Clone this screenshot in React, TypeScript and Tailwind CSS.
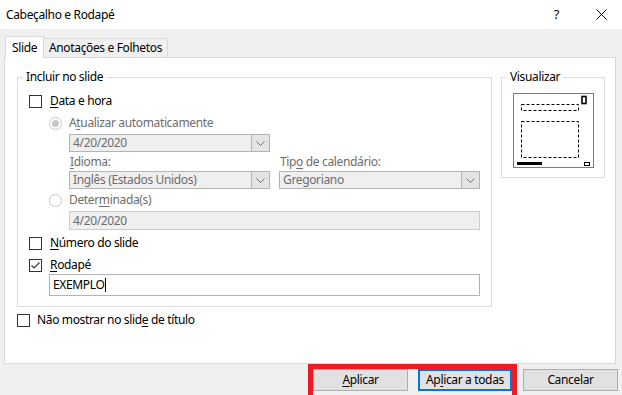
import React from "react";

const font = { fontFamily: '"Noto Sans", "Open Sans", sans-serif' };

const U = ({ children }: { children: React.ReactNode }) => (
  <span className="underline underline-offset-2 decoration-1">{children}</span>
);

const Checkbox = ({ checked = false }: { checked?: boolean }) => (
  <span className="w-[13px] h-[13px] border border-[#333333] bg-white flex items-center justify-center shrink-0">
    {checked && (
      <svg width="11" height="11" viewBox="0 0 11 11">
        <path d="M1.5 5.5 L4 8 L9.5 2.5" fill="none" stroke="#333" strokeWidth="1.1" />
      </svg>
    )}
  </span>
);

const Radio = ({ checked = false }: { checked?: boolean }) => (
  <span className="w-[13px] h-[13px] rounded-full border border-[#c8c8c8] bg-white flex items-center justify-center shrink-0">
    {checked && <span className="w-[7px] h-[7px] rounded-full bg-[#c8c8c8]" />}
  </span>
);

const Select = ({ value, w }: { value: string; w: string }) => (
  <div className={`${w} h-[18px] border border-[#b4b4b4] bg-[#efefef] flex items-stretch`}>
    <span className="flex-1 pl-[3px] leading-[16px] text-[#6d6d6d]">{value}</span>
    <span className="w-[18px] border-l border-[#b4b4b4] bg-[#e4e4e4] flex items-center justify-center">
      <svg width="9" height="5" viewBox="0 0 9 5">
        <path d="M0.5 0.5 L4.5 4.5 L8.5 0.5" fill="none" stroke="#6d6d6d" strokeWidth="1" />
      </svg>
    </span>
  </div>
);

const Group = ({
  label,
  className,
  children,
}: {
  label: string;
  className: string;
  children: React.ReactNode;
}) => (
  <div className={`relative border border-[#dcdcdc] shrink-0 ${className}`}>
    <span className="absolute -top-[9px] left-[5px] bg-white px-[3px] leading-[16px]">{label}</span>
    {children}
  </div>
);

const Preview = () => (
  <svg width="81" height="75" viewBox="0 0 81 75" className="block">
    <rect x="0.5" y="0.5" width="80" height="74" fill="white" stroke="#7a7a80" />
    <rect x="69" y="3.5" width="4" height="7" fill="white" stroke="black" strokeWidth="1.6" />
    <rect x="8.5" y="11.5" width="57" height="6" fill="none" stroke="black" strokeDasharray="3 2" />
    <rect x="8.5" y="28.5" width="57" height="36" fill="none" stroke="black" strokeDasharray="3 2" />
    <rect x="4" y="69" width="25" height="3" fill="black" />
    <rect x="71.5" y="69.5" width="5" height="3" fill="white" stroke="black" />
  </svg>
);

const App = () => {
  return (
    <div
      className="w-[622px] h-[395px] bg-[#f0f0f0] overflow-hidden text-[12px] tracking-[-0.35px] text-black flex flex-col"
      style={font}
    >
      <div className="h-[29px] bg-white flex items-center shrink-0">
        <span className="pl-[6px] flex-1 leading-[16px]">Cabeçalho e Rodapé</span>
        <span className="text-[13px] leading-none mr-[37px]">?</span>
        <svg width="11" height="11" viewBox="0 0 11 11" className="mr-[15px]">
          <path d="M0.5 0.5 L10.5 10.5 M10.5 0.5 L0.5 10.5" stroke="black" strokeWidth="1" />
        </svg>
      </div>

      <div className="flex items-end h-[28px] pl-[5px] shrink-0">
        <div className="h-[22px] w-[39px] bg-white border border-b-0 border-[#d9d9d9] flex items-center justify-center relative top-[1px] z-10">
          Slide
        </div>
        <div className="h-[19px] w-[124px] border border-l-0 border-b-0 border-[#d9d9d9] flex items-center justify-center">
          Anotações e Folhetos
        </div>
      </div>

      <div className="ml-[4px] w-[612px] h-[307px] bg-white border border-[#d9d9d9] shrink-0 flex flex-col pl-[12px] pt-[19px]">
        <div className="flex items-start gap-[9px]">
          <Group label="Incluir no slide" className="w-[475px] h-[230px] pl-[11px] pt-[16px]">
            <div className="flex items-center gap-[8px] h-[14px]">
              <Checkbox />
              <span>
                <U>D</U>ata e hora
              </span>
            </div>
            <div className="pl-[20px] mt-[8px] text-[#6d6d6d]">
              <div className="flex items-center gap-[7px] h-[14px]">
                <Radio checked />
                <span>
                  A<U>t</U>ualizar automaticamente
                </span>
              </div>
              <div className="pl-[20px] mt-[4px]">
                <Select value="4/20/2020" w="w-[201px]" />
                <div className="flex gap-[9px]">
                  <div>
                    <div className="leading-[19px] pl-[1px]">
                      <U>I</U>dioma:
                    </div>
                    <Select value="Inglês (Estados Unidos)" w="w-[201px]" />
                  </div>
                  <div>
                    <div className="leading-[19px] pl-[1px]">
                      Tip<U>o</U> de calendário:
                    </div>
                    <Select value="Gregoriano" w="w-[201px]" />
                  </div>
                </div>
              </div>
              <div className="flex items-center gap-[7px] h-[14px] mt-[4px]">
                <Radio />
                <span>
                  Deter<U>m</U>inada(s)
                </span>
              </div>
              <div className="pl-[20px] mt-[4px]">
                <div className="w-[411px] h-[19px] border border-[#cccccc] bg-[#efefef] pl-[3px] leading-[17px]">
                  4/20/2020
                </div>
              </div>
            </div>
            <div className="flex items-center gap-[8px] h-[14px] mt-[6px]">
              <Checkbox />
              <span>
                <U>N</U>úmero do slide
              </span>
            </div>
            <div className="flex items-center gap-[8px] h-[14px] mt-[8px]">
              <Checkbox checked />
              <span>
                <U>R</U>odapé
              </span>
            </div>
            <div className="pl-[20px] mt-[2px]">
              <div className="w-[431px] h-[22px] border border-[#b4b4b4] bg-white pl-[3px] leading-[20px] flex items-center">
                <span>EXEMPLO</span>
                <span className="w-px h-[14px] bg-black" />
              </div>
            </div>
          </Group>

          <Group label="Visualizar" className="w-[104px] h-[101px] pl-[11px] pt-[15px]">
            <Preview />
          </Group>
        </div>

        <div className="flex items-center gap-[7px] h-[14px] mt-[6px]">
          <Checkbox />
          <span>
            Não mostrar no slid<U>e</U> de título
          </span>
        </div>
      </div>

      <div className="flex items-start h-[31px] shrink-0 pl-[308px]">
        <div className="h-[31px] w-[209px] border-[5px] border-b-0 border-[#ed1c24] flex justify-between">
          <button className="w-[95px] h-[22px] bg-[#e1e1e1] border border-[#adadad]">
            <U>A</U>plicar
          </button>
          <button className="w-[94px] h-[22px] bg-[#e1e1e1] border-2 border-[#0078d7]">
            Ap<U>l</U>icar a todas
          </button>
        </div>
        <button className="ml-[6px] mt-[5px] w-[95px] h-[22px] bg-[#e1e1e1] border border-[#adadad]">
          Cancelar
        </button>
      </div>
    </div>
  );
};

export default App;
